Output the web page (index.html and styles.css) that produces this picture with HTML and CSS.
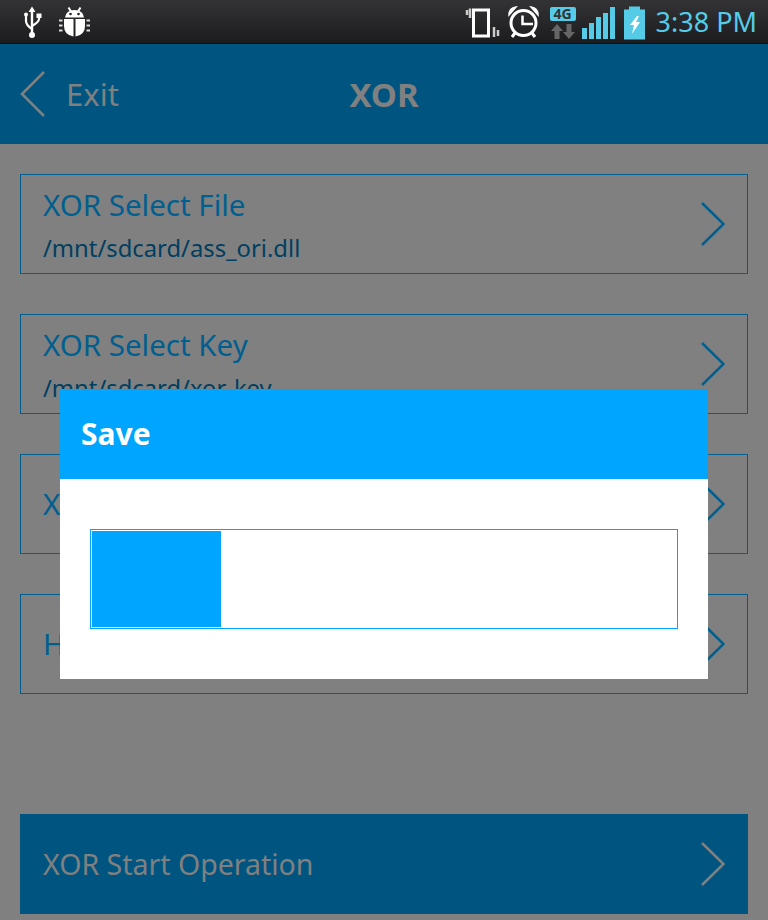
FILE: index.html
```html
<!DOCTYPE html>
<html lang="en">
  <head>
    <meta charset="UTF-8" />
    <meta name="viewport" content="width=device-width, initial-scale=1.0" />
    <title>XOR</title>
    <link rel="stylesheet" href="styles.css">
  </head>
  <body>
    <div class="status-bar">
      <div class="status-left">
        <svg class="icon-usb" width="20" height="32" viewBox="0 0 20 32">
          <path d="M10 0.500 L13.500 6 H11.200 V29 H8.800 V6 H6.500 Z" fill="#fff" />
          <circle cx="10" cy="29" r="3" fill="#fff" />
          <path d="M4 9 V15 Q4 19 10 23 M17 11 V13 Q17 16 10 20" stroke="#fff" stroke-width="2.200" fill="none" />
          <circle cx="4" cy="8.500" r="2" fill="#fff" />
          <rect x="14.500" y="7.500" width="5" height="4.500" fill="#fff" />
        </svg>
        <svg class="icon-bug" width="32" height="32" viewBox="0 0 32 32">
          <path d="M9.500 1.500 L12 5.500 M21.500 1.500 L19 5.500" stroke="#fff" stroke-width="2" />
          <path d="M6 11.500 Q7 4 15.500 4 Q24 4 25 11.500 Z" fill="#fff" />
          <circle cx="11.500" cy="8" r="1.300" fill="#222" />
          <circle cx="19.500" cy="8" r="1.300" fill="#222" />
          <path d="M5 13 H14.500 V30.500 Q5 29 5 20 Z M16.500 13 H26 V20 Q26 29 16.500 30.500 Z" fill="#fff" />
          <path d="M0 14.500 H3.500 M0 19.500 H3.500 M0 24.500 H3.500 M27.500 14.500 H31 M27.500 19.500 H31 M27.500 24.500 H31" stroke="#ddd" stroke-width="2" />
        </svg>
      </div>
      <div class="status-right">
        <svg class="icon-vibrate" width="34" height="34" viewBox="0 0 34 34">
          <rect x="8.500" y="5" width="15" height="26" fill="none" stroke="#fff" stroke-width="3" />
          <path d="M2 5 V10 M5 3.500 V13 M29 22 V32 M33 25 V31" stroke="#ccc" stroke-width="2.500" />
        </svg>
        <svg class="icon-alarm" width="34" height="34" viewBox="0 0 34 34">
          <circle cx="16.500" cy="18" r="12.500" fill="none" stroke="#fff" stroke-width="3" />
          <path d="M15.500 10.500 V19 H26" fill="none" stroke="#fff" stroke-width="2.500" />
          <path d="M2 10 Q2 3 9 2 Z M31 10 Q31 3 24 2 Z" fill="#fff" stroke="#fff" stroke-width="1.500" />
          <path d="M8 28 L5 32 M25 28 L28 32" stroke="#fff" stroke-width="3" />
        </svg>
        <div class="net">
          <span class="net-label">4G</span>
          <svg width="24" height="15" viewBox="0 0 24 15">
            <path d="M6 0 L12 7 H8.500 V15 H3.500 V7 H0 Z M18 15 L24 8 H20.500 V0 H15.500 V8 H12 Z" fill="#666" />
          </svg>
        </div>
        <div class="signal">
          <span class="bar bar-1"></span>
          <span class="bar bar-2"></span>
          <span class="bar bar-3"></span>
          <span class="bar bar-4"></span>
          <span class="bar bar-5"></span>
        </div>
        <svg class="icon-battery" width="21" height="34" viewBox="0 0 21 34">
          <path d="M5 1.500 H16 V4.500 H21 V34.500 H0 V4.500 H5 Z" fill="#55cbe8" />
          <path d="M13 11 L6 20 H10 L8 29 L16 17 H12 L15 11 Z" fill="#fff" />
        </svg>
        <span class="clock">3:38 PM</span>
      </div>
    </div>

    <header class="app-header">
      <svg class="back-arrow" width="26" height="46" viewBox="0 0 26 46">
        <path d="M24 1 L2 23 L24 45" fill="none" stroke="#808080" stroke-width="2.500" />
      </svg>
      <span class="exit-label">Exit</span>
      <h1>XOR</h1>
    </header>

    <main class="content">
      <div class="rows">
        <div class="row">
          <div class="row-text">
            <div class="row-title">XOR Select File</div>
            <div class="row-sub">/mnt/sdcard/ass_ori.dll</div>
          </div>
          <svg class="chevron" width="24" height="44" viewBox="0 0 24 44"><path d="M1 1 L22.500 22 L1 43" /></svg>
        </div>
        <div class="row">
          <div class="row-text">
            <div class="row-title">XOR Select Key</div>
            <div class="row-sub">/mnt/sdcard/xor-key</div>
          </div>
          <svg class="chevron" width="24" height="44" viewBox="0 0 24 44"><path d="M1 1 L22.500 22 L1 43" /></svg>
        </div>
        <div class="row">
          <div class="row-text">
            <div class="row-title">XOR Save Path</div>
          </div>
          <svg class="chevron" width="24" height="44" viewBox="0 0 24 44"><path d="M1 1 L22.500 22 L1 43" /></svg>
        </div>
        <div class="row">
          <div class="row-text">
            <div class="row-title">Help</div>
          </div>
          <svg class="chevron" width="24" height="44" viewBox="0 0 24 44"><path d="M1 1 L22.500 22 L1 43" /></svg>
        </div>
      </div>

      <div class="start-button">
        <span>XOR Start Operation</span>
        <svg class="chevron chevron-muted" width="24" height="44" viewBox="0 0 24 44"><path d="M1 1 L22.500 22 L1 43" /></svg>
      </div>
    </main>

    <div class="dialog">
      <div class="dialog-title">Save</div>
      <div class="dialog-body">
        <div class="progress">
          <div class="progress-fill" style="width: 22.1%"></div>
        </div>
      </div>
    </div>
  </body>
</html>
```

FILE: styles.css
```css
* {
  box-sizing: border-box;
}
html,
body {
  margin: 0;
  height: 920px;
  overflow: hidden;
}
body {
  position: relative;
  background-color: #808080;
  font-family: "Noto Sans", "Open Sans", sans-serif;
}
.status-bar {
  height: 44px;
  display: flex;
  justify-content: space-between;
  align-items: center;
  background: linear-gradient(#333335, #1c1c1e);
  border-bottom: 1px solid #111;
}
.status-left {
  display: flex;
  align-items: center;
  gap: 17px;
  padding-left: 22px;
}
.status-right {
  display: flex;
  align-items: center;
  padding-right: 11px;
}
.status-right svg {
  display: block;
  overflow: visible;
}
.icon-vibrate {
  margin-right: 8px;
}
.icon-alarm {
  margin-right: 9px;
}
.net {
  width: 26px;
  margin-top: 3px;
  margin-right: 6px;
}
.net svg {
  margin-left: 1px;
}
.net-label {
  display: block;
  height: 14px;
  margin-bottom: 3px;
  background-color: #55cbe8;
  border-radius: 2px;
  color: #333;
  font-size: 14px;
  font-weight: 700;
  line-height: 14px;
  text-align: center;
}
.signal {
  display: flex;
  align-items: flex-end;
  gap: 2px;
  height: 32px;
  margin-top: 3px;
  margin-right: 9px;
}
.bar {
  width: 5px;
  background-color: #55cbe8;
}
.bar-1 {
  height: 11px;
}
.bar-2 {
  height: 16px;
}
.bar-3 {
  height: 22px;
}
.bar-4 {
  height: 26px;
}
.bar-5 {
  height: 32px;
}
.icon-battery {
  margin-right: 11px;
}
.clock {
  color: #55cbe8;
  font-size: 27px;
  line-height: 34px;
}
.app-header {
  position: relative;
  height: 100px;
  display: flex;
  align-items: center;
  padding-left: 20px;
  background-color: #005580;
  color: #808080;
}
.exit-label {
  margin-left: 20px;
  font-size: 31px;
}
.app-header h1 {
  position: absolute;
  left: 0;
  right: 0;
  margin: 0;
  font-size: 33px;
  font-weight: 700;
  text-align: center;
}
.content {
  height: 776px;
  display: flex;
  flex-direction: column;
  justify-content: space-between;
  padding: 30px 20px 6px;
}
.rows {
  display: flex;
  flex-direction: column;
  gap: 40px;
}
.row {
  height: 100px;
  display: flex;
  justify-content: space-between;
  align-items: center;
  padding: 0 22px;
  border: 1px solid #005f8f;
}
.row-title {
  color: #005f8f;
  font-size: 29.500px;
  line-height: 40px;
}
.row-sub {
  margin-top: 6px;
  margin-bottom: -2px;
  color: #003f60;
  font-size: 23.800px;
  line-height: 34px;
}
.chevron {
  fill: none;
  stroke: #005f8f;
  stroke-width: 2.500;
}
.start-button {
  height: 100px;
  display: flex;
  justify-content: space-between;
  align-items: center;
  padding: 0 23px;
  background-color: #005580;
  color: #808080;
  font-size: 28.500px;
}
.chevron-muted {
  stroke: #808080;
}
.dialog {
  position: absolute;
  left: 60px;
  top: 389px;
  width: 648px;
  height: 290px;
  background-color: #fff;
}
.dialog-title {
  height: 90px;
  padding-left: 21px;
  background-color: #00a5ff;
  color: #fff;
  font-size: 30px;
  font-weight: 700;
  line-height: 90px;
}
.dialog-body {
  padding: 50px 30px;
}
.progress {
  height: 100px;
  padding: 1px;
  border: 1px solid #00a5ff;
}
.progress-fill {
  height: 100%;
  background-color: #00a5ff;
}
```
